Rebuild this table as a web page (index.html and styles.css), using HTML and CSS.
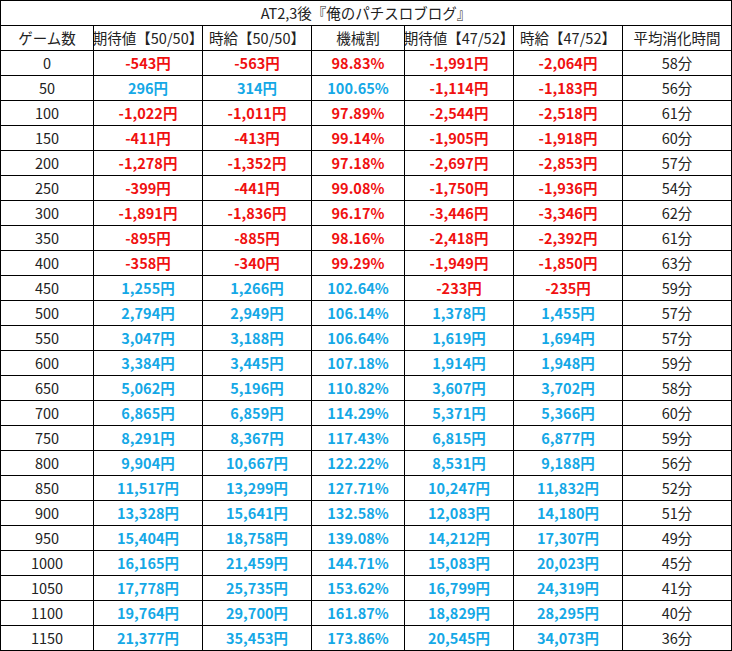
FILE: index.html
```html
<!DOCTYPE html>
<html lang="ja">
<head>
<meta charset="utf-8">
<title>AT2,3後『俺のパチスロブログ』</title>
<link rel="stylesheet" href="styles.css">
</head>
<body>
<div class="sheet">
  <div class="c title">AT2,3後『俺のパチスロブログ』</div>

  <div class="c h">ゲーム数</div><div class="c h">期待値【50/50】</div><div class="c h">時給【50/50】</div><div class="c h">機械割</div><div class="c h">期待値【47/52】</div><div class="c h">時給【47/52】</div><div class="c h">平均消化時間</div>

  <div class="c n">0</div><div class="c r">-543円</div><div class="c r">-563円</div><div class="c r">98.83%</div><div class="c r">-1,991円</div><div class="c r">-2,064円</div><div class="c n">58分</div>
  <div class="c n">50</div><div class="c b">296円</div><div class="c b">314円</div><div class="c b">100.65%</div><div class="c r">-1,114円</div><div class="c r">-1,183円</div><div class="c n">56分</div>
  <div class="c n">100</div><div class="c r">-1,022円</div><div class="c r">-1,011円</div><div class="c r">97.89%</div><div class="c r">-2,544円</div><div class="c r">-2,518円</div><div class="c n">61分</div>
  <div class="c n">150</div><div class="c r">-411円</div><div class="c r">-413円</div><div class="c r">99.14%</div><div class="c r">-1,905円</div><div class="c r">-1,918円</div><div class="c n">60分</div>
  <div class="c n">200</div><div class="c r">-1,278円</div><div class="c r">-1,352円</div><div class="c r">97.18%</div><div class="c r">-2,697円</div><div class="c r">-2,853円</div><div class="c n">57分</div>
  <div class="c n">250</div><div class="c r">-399円</div><div class="c r">-441円</div><div class="c r">99.08%</div><div class="c r">-1,750円</div><div class="c r">-1,936円</div><div class="c n">54分</div>
  <div class="c n">300</div><div class="c r">-1,891円</div><div class="c r">-1,836円</div><div class="c r">96.17%</div><div class="c r">-3,446円</div><div class="c r">-3,346円</div><div class="c n">62分</div>
  <div class="c n">350</div><div class="c r">-895円</div><div class="c r">-885円</div><div class="c r">98.16%</div><div class="c r">-2,418円</div><div class="c r">-2,392円</div><div class="c n">61分</div>
  <div class="c n">400</div><div class="c r">-358円</div><div class="c r">-340円</div><div class="c r">99.29%</div><div class="c r">-1,949円</div><div class="c r">-1,850円</div><div class="c n">63分</div>
  <div class="c n">450</div><div class="c b">1,255円</div><div class="c b">1,266円</div><div class="c b">102.64%</div><div class="c r">-233円</div><div class="c r">-235円</div><div class="c n">59分</div>
  <div class="c n">500</div><div class="c b">2,794円</div><div class="c b">2,949円</div><div class="c b">106.14%</div><div class="c b">1,378円</div><div class="c b">1,455円</div><div class="c n">57分</div>
  <div class="c n">550</div><div class="c b">3,047円</div><div class="c b">3,188円</div><div class="c b">106.64%</div><div class="c b">1,619円</div><div class="c b">1,694円</div><div class="c n">57分</div>
  <div class="c n">600</div><div class="c b">3,384円</div><div class="c b">3,445円</div><div class="c b">107.18%</div><div class="c b">1,914円</div><div class="c b">1,948円</div><div class="c n">59分</div>
  <div class="c n">650</div><div class="c b">5,062円</div><div class="c b">5,196円</div><div class="c b">110.82%</div><div class="c b">3,607円</div><div class="c b">3,702円</div><div class="c n">58分</div>
  <div class="c n">700</div><div class="c b">6,865円</div><div class="c b">6,859円</div><div class="c b">114.29%</div><div class="c b">5,371円</div><div class="c b">5,366円</div><div class="c n">60分</div>
  <div class="c n">750</div><div class="c b">8,291円</div><div class="c b">8,367円</div><div class="c b">117.43%</div><div class="c b">6,815円</div><div class="c b">6,877円</div><div class="c n">59分</div>
  <div class="c n">800</div><div class="c b">9,904円</div><div class="c b">10,667円</div><div class="c b">122.22%</div><div class="c b">8,531円</div><div class="c b">9,188円</div><div class="c n">56分</div>
  <div class="c n">850</div><div class="c b">11,517円</div><div class="c b">13,299円</div><div class="c b">127.71%</div><div class="c b">10,247円</div><div class="c b">11,832円</div><div class="c n">52分</div>
  <div class="c n">900</div><div class="c b">13,328円</div><div class="c b">15,641円</div><div class="c b">132.58%</div><div class="c b">12,083円</div><div class="c b">14,180円</div><div class="c n">51分</div>
  <div class="c n">950</div><div class="c b">15,404円</div><div class="c b">18,758円</div><div class="c b">139.08%</div><div class="c b">14,212円</div><div class="c b">17,307円</div><div class="c n">49分</div>
  <div class="c n">1000</div><div class="c b">16,165円</div><div class="c b">21,459円</div><div class="c b">144.71%</div><div class="c b">15,083円</div><div class="c b">20,023円</div><div class="c n">45分</div>
  <div class="c n">1050</div><div class="c b">17,778円</div><div class="c b">25,735円</div><div class="c b">153.62%</div><div class="c b">16,799円</div><div class="c b">24,319円</div><div class="c n">41分</div>
  <div class="c n">1100</div><div class="c b">19,764円</div><div class="c b">29,700円</div><div class="c b">161.87%</div><div class="c b">18,829円</div><div class="c b">28,295円</div><div class="c n">40分</div>
  <div class="c n">1150</div><div class="c b">21,377円</div><div class="c b">35,453円</div><div class="c b">173.86%</div><div class="c b">20,545円</div><div class="c b">34,073円</div><div class="c n">36分</div>
</div>
</body>
</html>
```

FILE: styles.css
```css
html, body {
  margin: 0;
  padding: 0;
  background: #ffffff;
}

.sheet {
  display: grid;
  grid-template-columns: 93px 109px 109px 93px 109px 109px 109px;
  grid-auto-rows: 25px;
  width: 731px;
  border-left: 1px solid #000;
  border-top: 1px solid #000;
  font-family: "Noto Sans CJK JP", "Noto Sans", sans-serif;
  font-size: 14.5px;
  color: #222;
}

.c {
  display: flex;
  align-items: center;
  justify-content: center;
  overflow: hidden;
  white-space: nowrap;
  border-right: 1px solid #000;
  border-bottom: 1px solid #000;
  line-height: 1;
  padding-top: 1px;
}

.title {
  grid-column: 1 / -1;
}

.h {
  font-weight: 400;
}

.n {
  font-weight: 400;
}

.r {
  font-weight: 700;
  color: #f01010;
}

.b {
  font-weight: 700;
  color: #14a8e6;
}
```
